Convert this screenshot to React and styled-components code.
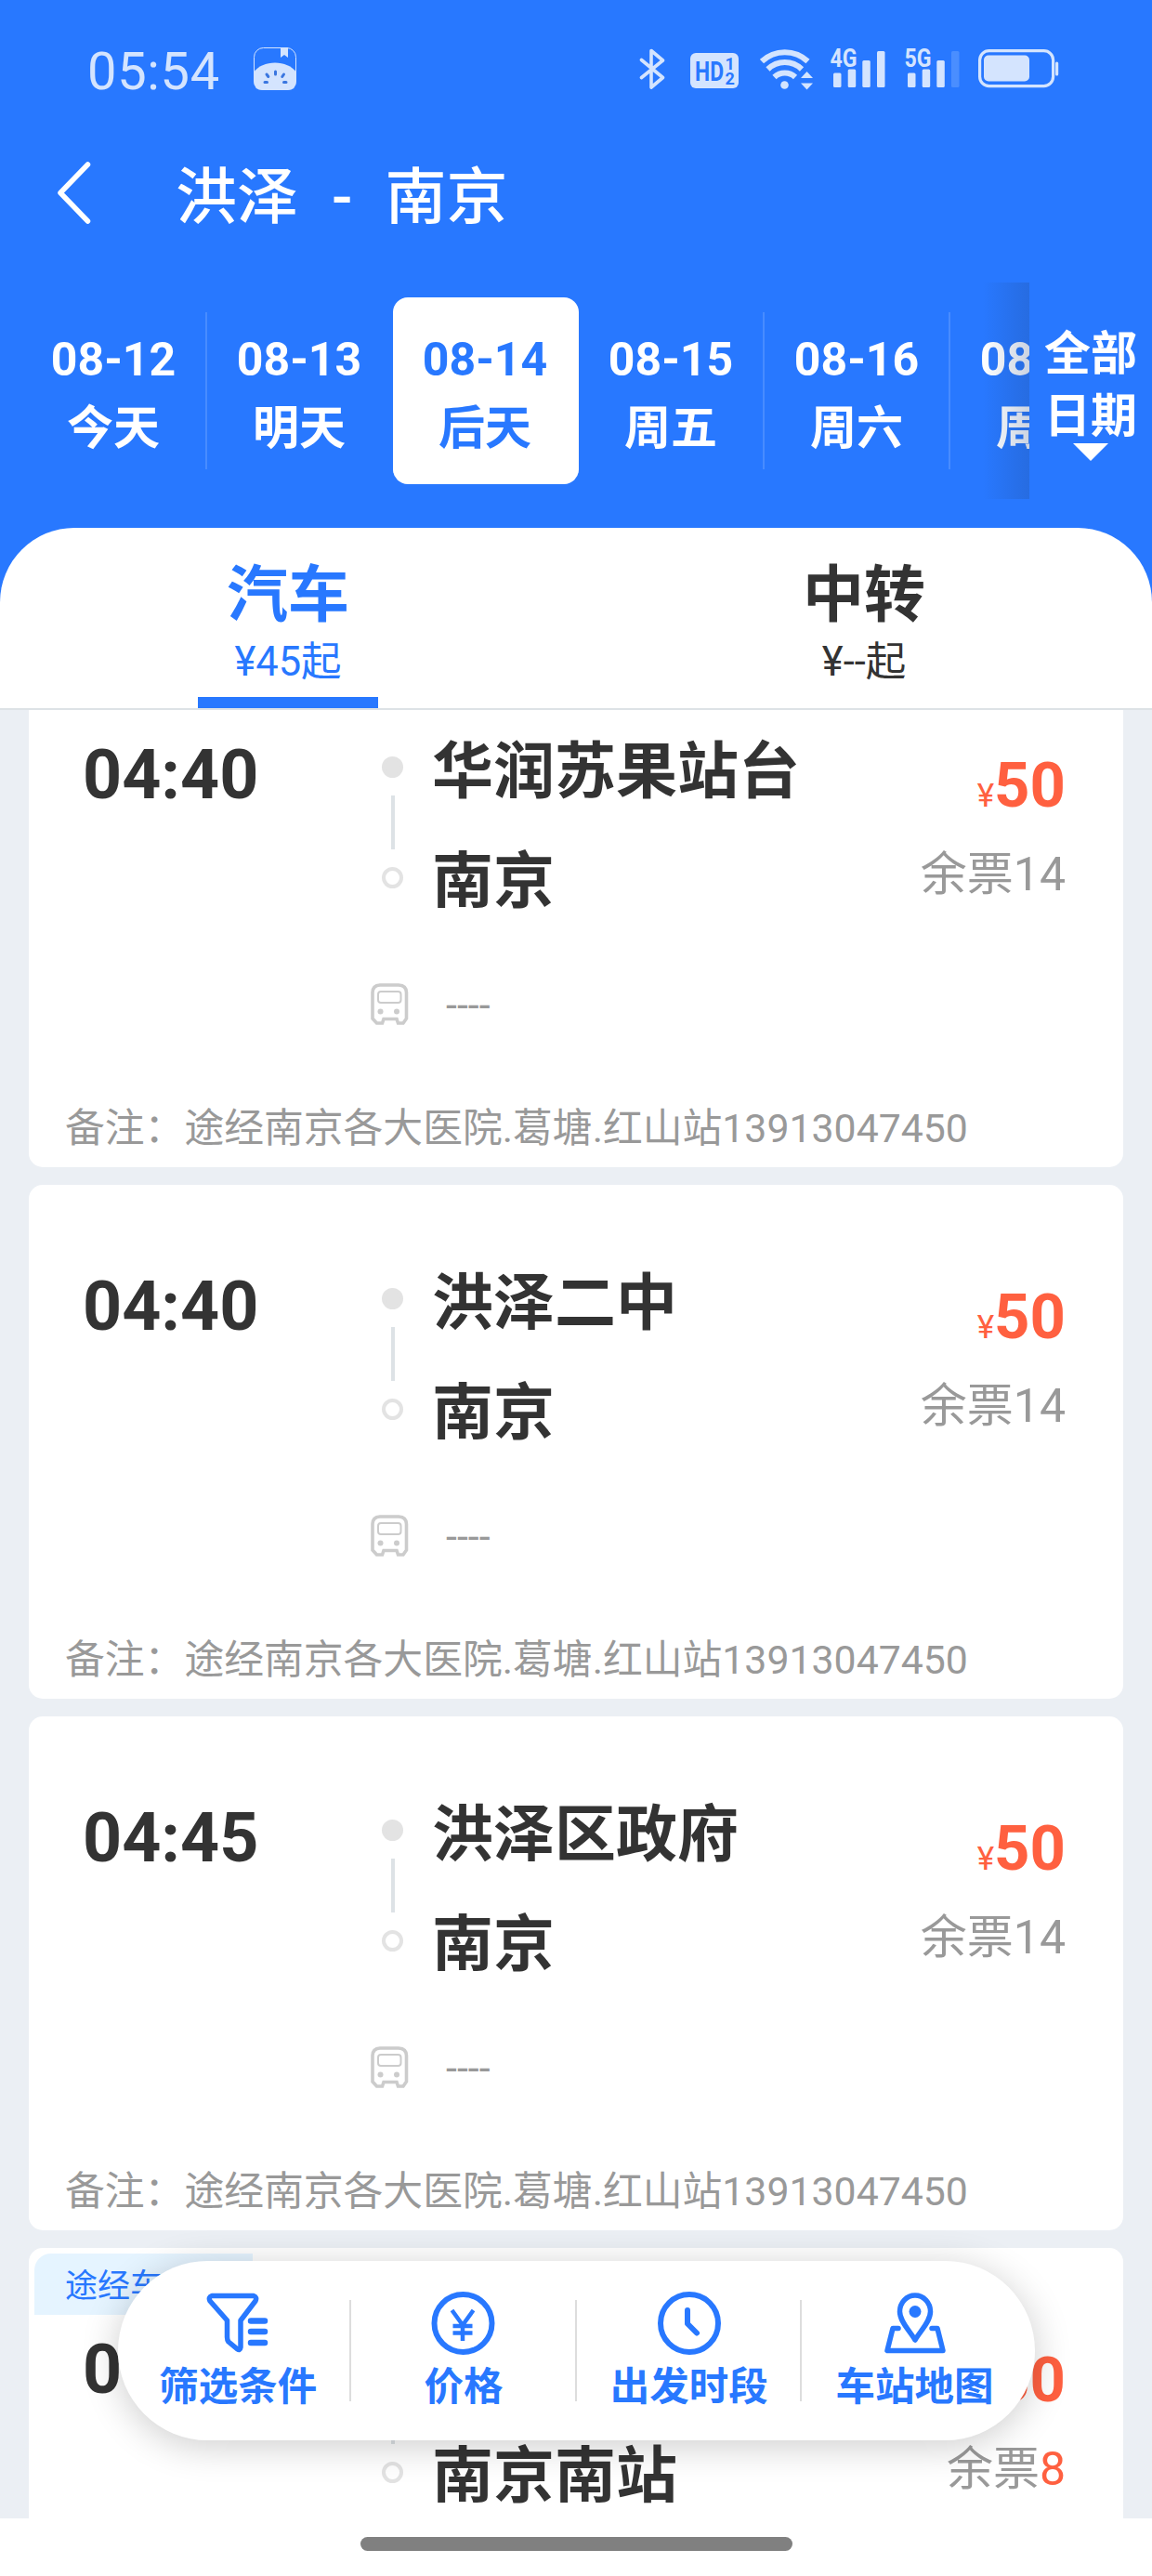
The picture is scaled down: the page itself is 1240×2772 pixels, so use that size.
import React from 'react';
import styled, { createGlobalStyle } from 'styled-components';

const dates = [
	{ date: '08-12', day: '今天' },
	{ date: '08-13', day: '明天' },
	{ date: '08-14', day: '后天' },
	{ date: '08-15', day: '周五' },
	{ date: '08-16', day: '周六' },
	{ date: '08-17', day: '周日' },
];

const remark = '备注：途经南京各大医院.葛塘.红山站13913047450';

const trips = [
	{ id: 1, time: '04:40', from: '华润苏果站台', to: '南京', price: 50, left: 14, remark },
	{ id: 2, time: '04:40', from: '洪泽二中', to: '南京', price: 50, left: 14, remark },
	{ id: 3, time: '04:45', from: '洪泽区政府', to: '南京', price: 50, left: 14, remark },
	{ id: 4, time: '05:00', from: '洪泽', to: '南京南站', price: 50, left: 8, remark, tag: '途经车' },
];

const BluetoothIcon = () => (
	<svg width="28" height="46" viewBox="0 0 28 46" fill="none" stroke="#d4e4fe" strokeWidth="3.600" strokeLinejoin="round" strokeLinecap="round">
		<path d="M2.500 13.500 L25.500 32.500 L13 43 V3.500 L25.500 14 L2.500 32.500" />
	</svg>
);

const HdIcon = () => (
	<svg width="52" height="42" viewBox="0 0 52 42">
		<rect y="4" width="52" height="38" rx="6" fill="#d4e4fe" />
		<g fill="#2878ff" fontFamily="Roboto, sans-serif" fontWeight="700">
			<text x="5" y="34" fontSize="29" textLength="31" lengthAdjust="spacingAndGlyphs">HD</text>
			<text x="37.500" y="21.500" fontSize="18">1</text>
			<text x="37.500" y="37.500" fontSize="18">2</text>
		</g>
	</svg>
);

const WifiIcon = () => (
	<svg width="58" height="46" viewBox="0 0 58 46" fill="none" stroke="#d4e4fe" strokeWidth="6">
		<path d="M2 15 A36 36 0 0 1 51.500 15" />
		<path d="M8.500 23.500 A26 26 0 0 1 45 23.500" />
		<path d="M15.500 32 A16 16 0 0 1 38 32" />
		<circle cx="26.500" cy="40.500" r="4.300" fill="#d4e4fe" stroke="none" />
		<path d="M44 33 L50.500 26 L57 33 Z M44 38.500 L50.500 45.500 L57 38.500 Z" fill="#d4e4fe" stroke="none" />
	</svg>
);

const SignalIcon = ({ label, weak }) => (
	<svg width="60" height="44" viewBox="0 0 60 44" fill="#d4e4fe" overflow="visible">
		<text x="0.500" y="20" fontSize="28" fontFamily="Roboto, sans-serif" fontWeight="700" textLength="29" lengthAdjust="spacingAndGlyphs">
			{label}
		</text>
		<rect x="4" y="26.500" width="8.500" height="15.500" rx="1.500" />
		<rect x="19.700" y="22.500" width="8.500" height="19.500" rx="1.500" />
		<rect x="35.300" y="13" width="8.500" height="29" rx="1.500" />
		<rect x="51" y="3" width="8.500" height="39" rx="1.500" opacity={weak ? 0.2 : 1} />
	</svg>
);

const BatteryIcon = () => (
	<svg width="88" height="42" viewBox="0 0 88 42">
		<rect x="1.600" y="1.600" width="79" height="38" rx="10" fill="none" stroke="#d4e4fe" strokeWidth="3.200" />
		<rect x="6" y="6.500" width="49" height="28" rx="5" fill="#d4e4fe" />
		<rect x="83" y="13.500" width="3.200" height="15" rx="1.500" fill="#d4e4fe" />
	</svg>
);

const MelonIcon = () => (
	<svg width="46" height="46" viewBox="0 0 46 46">
		<rect x="0.500" y="0.500" width="45" height="45" rx="10" fill="none" stroke="#d4e4fe" />
		<path d="M0 27 C9 13 37 13 46 27 V36 Q46 46 36 46 H10 Q0 46 0 36 Z" fill="#d4e4fe" />
		<path d="M29 0 H37 V11 L33 8 L29 11 Z" fill="#d4e4fe" />
		<path d="M23.500 26 V29 M14 29 L15.800 31.500 M32.500 29 L30.800 31.500 M12 37.500 H14.500 M32.500 37.500 H35" stroke="#3a76e0" strokeWidth="3" strokeLinecap="round" />
	</svg>
);

const BackIcon = () => (
	<svg width="36" height="67" viewBox="0 0 36 67" fill="none" stroke="#fff" strokeWidth="5.500" strokeLinecap="round" strokeLinejoin="round">
		<path d="M32.500 3 L3 33.500 L32.500 64" />
	</svg>
);

const BusIcon = () => (
	<svg width="42" height="45" viewBox="0 0 42 45" fill="none" stroke="#ccc" strokeWidth="3.600">
		<path d="M10 2 H30 Q38.500 2.500 38.500 10 V38 L35 43 H29.500 L28 38.500 H14 L12.500 43 H6.500 L2 38 V10 Q2 2.500 10 2 Z" />
		<rect x="8" y="9" width="24.500" height="12" rx="3" strokeWidth="2" />
		<circle cx="10.500" cy="30.500" r="3" fill="#ccc" stroke="none" />
		<circle cx="28" cy="30.500" r="3" fill="#ccc" stroke="none" />
	</svg>
);

const FilterIcon = () => (
	<svg width="70" height="70" viewBox="0 0 70 70" fill="none" stroke="#2878ff" strokeWidth="5.500" strokeLinejoin="round" strokeLinecap="round">
		<path d="M7 5.500 H52 Q56 7 54 11 L38 32 V61 Q37.500 65 34 62.500 L25 55 Q23.500 53 23.500 50 V32 L5 11 Q3 7 7 5.500 Z" />
		<path d="M49 32.500 H64 M49 44 H64 M49 56 H64" strokeWidth="6.500" />
	</svg>
);

const YuanIcon = () => (
	<svg width="70" height="70" viewBox="0 0 70 70" fill="none" stroke="#2878ff" strokeWidth="6">
		<circle cx="34.500" cy="35" r="31" />
		<path d="M22.500 21 L34 37 L45.500 21 M34 36 V54 M23.500 38 H44.500 M23.500 45.500 H44.500" strokeWidth="4.500" />
	</svg>
);

const ClockIcon = () => (
	<svg width="70" height="70" viewBox="0 0 70 70" fill="none" stroke="#2878ff" strokeWidth="6" strokeLinecap="round" strokeLinejoin="round">
		<circle cx="35" cy="35" r="31" />
		<path d="M33 21 V35.500 L43 45.500" />
	</svg>
);

const MapIcon = () => (
	<svg width="70" height="70" viewBox="0 0 70 70" fill="none" stroke="#2878ff" strokeWidth="5.500" strokeLinejoin="round" strokeLinecap="round">
		<path d="M35 53 C29 43 18.500 33 18.500 22.500 A16.500 17.500 0 0 1 51.500 22.500 C51.500 33 41 43 35 53 Z" />
		<circle cx="35" cy="22.500" r="6.500" fill="#2878ff" stroke="none" />
		<path d="M17 40.500 H11 L5 64.500 H65 L59 40.500 H53" />
	</svg>
);

const actions = [
	{ label: '筛选条件', Icon: FilterIcon },
	{ label: '价格', Icon: YuanIcon },
	{ label: '出发时段', Icon: ClockIcon },
	{ label: '车站地图', Icon: MapIcon },
];

const TripCard = ({ trip }) => (
	<Card>
		{trip.tag && <Tag>{trip.tag}</Tag>}
		<CardMain>
			<Time>{trip.time}</Time>
			<Rail>
				<Dot />
				<RailLine />
				<Dot $hollow />
			</Rail>
			<Stations>
				<p>{trip.from}</p>
				<p>{trip.to}</p>
			</Stations>
			<Fare>
				<Price>
					<small>¥</small>
					{trip.price}
				</Price>
				<Remaining $few={trip.left < 10}>
					余票<span>{trip.left}</span>
				</Remaining>
			</Fare>
		</CardMain>
		<BusRow>
			<BusIcon />
			<span>----</span>
		</BusRow>
		<Remark>{trip.remark}</Remark>
	</Card>
);

const App = () => {
	return (
		<Screen>
			<GlobalStyle />
			<Header>
				<StatusBar>
					<Clock>05:54</Clock>
					<MelonIcon />
					<StatusIcons>
						<BluetoothIcon />
						<HdIcon />
						<WifiIcon />
						<SignalIcon label="4G" />
						<SignalIcon label="5G" weak />
						<BatteryIcon />
					</StatusIcons>
				</StatusBar>
				<NavBar>
					<BackIcon />
					<Title>
						洪泽<span>-</span>南京
					</Title>
				</NavBar>
				<DateBar>
					<DateList>
						{dates.map((item, i) => (
							<DateItem key={item.date} $active={i === 2} $divider={i !== 1 && i !== 2}>
								<strong>{item.date}</strong>
								<em>{item.day}</em>
							</DateItem>
						))}
						<DateShade />
					</DateList>
					<AllDates>
						<span>全部</span>
						<span>日期</span>
						<Caret />
					</AllDates>
				</DateBar>
				<Tabs>
					<Tab $active>
						<h2>汽车</h2>
						<p>¥45起</p>
					</Tab>
					<Tab>
						<h2>中转</h2>
						<p>¥--起</p>
					</Tab>
				</Tabs>
			</Header>
			<TripList>
				{trips.map((trip) => (
					<TripCard key={trip.id} trip={trip} />
				))}
			</TripList>
			<ActionBar>
				{actions.map(({ label, Icon }) => (
					<Action key={label}>
						<Icon />
						<span>{label}</span>
					</Action>
				))}
			</ActionBar>
			<HomeArea>
				<HomeBar />
			</HomeArea>
		</Screen>
	);
};

export default App;

const GlobalStyle = createGlobalStyle`
	* {
		box-sizing: border-box;
		margin: 0;
		padding: 0;
	}
	body {
		background: #fff;
		font-family: Roboto, 'Noto Sans CJK SC', sans-serif;
	}
	svg {
		display: block;
		flex-shrink: 0;
	}
`;

const Screen = styled.div`
	position: relative;
	width: 1240px;
	height: 2772px;
	display: flex;
	flex-direction: column;
	overflow: hidden;
	background: #fff;
`;

const Header = styled.header`
	flex-shrink: 0;
	background: #2878ff;
	color: #fff;
`;

const StatusBar = styled.div`
	display: flex;
	align-items: center;
	height: 145px;
	padding: 3px 99px 0 94px;
	color: #d4e4fe;
`;

const Clock = styled.div`
	width: 179px;
	font-size: 56px;
	letter-spacing: 0.7px;
	line-height: 64px;
	padding-top: 5px;
`;

const StatusIcons = styled.div`
	display: flex;
	align-items: center;
	margin-left: auto;
	gap: 20px;

	> :nth-child(2) {
		margin-left: 7px;
	}
	> :nth-child(3) {
		margin-left: 3px;
	}
	> :nth-child(4) {
		margin-left: -3px;
	}
`;

const NavBar = styled.div`
	display: flex;
	align-items: flex-start;
	height: 159px;
	padding: 29px 0 0 62px;
`;

const Title = styled.h1`
	margin-left: 91px;
	font-size: 66px;
	font-weight: 500;
	line-height: 78px;

	> span {
		margin: 0 35px 0 36px;
	}
`;

const DateBar = styled.div`
	display: flex;
	height: 233px;
	margin-bottom: 31px;
`;

const DateList = styled.div`
	position: relative;
	display: flex;
	width: 1108px;
	padding: 16px 0 16px 23px;
	overflow: hidden;
`;

const DateItem = styled.div`
	position: relative;
	flex: 0 0 200px;
	padding: 31px 2px 0 0;
	text-align: center;
	border-radius: 16px;
	font-size: 50px;
	background: ${({ $active }) => ($active ? '#fff' : 'transparent')};
	color: ${({ $active }) => ($active ? '#2878ff' : '#fff')};

	> strong {
		display: block;
		font-weight: 700;
		line-height: 72px;
	}
	> em {
		display: block;
		font-style: normal;
		font-weight: 700;
		line-height: 76px;
	}

	&::after {
		content: '';
		display: ${({ $divider }) => ($divider ? 'block' : 'none')};
		position: absolute;
		top: 16px;
		right: 0;
		width: 2px;
		height: 169px;
		background: rgba(255, 255, 255, 0.15);
	}
`;

const DateShade = styled.div`
	position: absolute;
	top: 0;
	right: 0;
	width: 50px;
	height: 100%;
	background: linear-gradient(to right, rgba(34, 60, 100, 0), rgba(34, 70, 130, 0.24));
`;

const AllDates = styled.div`
	flex: 1;
	display: flex;
	flex-direction: column;
	align-items: center;
	padding-top: 44px;
	font-size: 50px;
	font-weight: 700;
	line-height: 67px;
`;

const Caret = styled.i`
	margin-top: -5px;
	border: 19px solid transparent;
	border-top-color: #fff;
	border-bottom: 0;
`;

const Tabs = styled.div`
	display: flex;
	height: 196px;
	background: #fff;
	border-bottom: 2px solid #dde2e6;
	border-radius: 80px 80px 0 0;
`;

const Tab = styled.div`
	flex: 1;
	display: flex;
	flex-direction: column;
	align-items: center;
	color: ${({ $active }) => ($active ? '#2878ff' : '#333')};

	> h2 {
		margin-top: 33px;
		font-size: 66px;
		font-weight: 700;
		line-height: 80px;
	}
	> p {
		font-size: 43.5px;
		line-height: 63px;
	}

	&::after {
		content: '';
		width: 194px;
		height: 12px;
		margin-top: auto;
		background: ${({ $active }) => ($active ? '#2878ff' : 'transparent')};
	}
`;

const TripList = styled.main`
	flex-shrink: 0;
	height: 1946px;
	padding: 0 31px;
	overflow: hidden;
	background: #ebeff4;

	> :first-child {
		margin-top: -61px;
	}
`;

const Card = styled.section`
	position: relative;
	height: 553px;
	margin-bottom: 19px;
	padding-top: 69px;
	border-radius: 15px;
	background: #fff;
`;

const Tag = styled.div`
	position: absolute;
	top: 6px;
	left: 6px;
	width: 235px;
	height: 66px;
	padding-left: 33px;
	border-radius: 18px 0 18px 0;
	background: #e5f4ff;
	color: #2878ff;
	font-size: 35px;
	line-height: 71px;
`;

const CardMain = styled.div`
	display: flex;
	height: 238px;
	padding: 0 62px 0 58px;
`;

const Time = styled.div`
	width: 322px;
	color: #333;
	font-size: 73.5px;
	font-weight: 700;
	line-height: 125px;
`;

const Rail = styled.div`
	display: flex;
	flex-direction: column;
	align-items: center;
	gap: 19px;
	padding-top: 42px;
`;

const Dot = styled.i`
	width: 23px;
	height: 23px;
	border-radius: 50%;
	border: 4px solid #e3e3e3;
	background: ${({ $hollow }) => ($hollow ? '#fff' : '#e3e3e3')};
`;

const RailLine = styled.i`
	width: 4px;
	height: 58px;
	background: #dde2e6;
`;

const Stations = styled.div`
	margin-left: 31px;
	color: #333;
	font-size: 66px;
	font-weight: 700;
	line-height: 118px;
`;

const Fare = styled.div`
	margin-left: auto;
	text-align: right;
`;

const Price = styled.div`
	color: #ff6040;
	font-size: 67px;
	font-weight: 700;
	line-height: 146px;

	> small {
		font-size: 35px;
		font-weight: 400;
		line-height: 0;
	}
`;

const Remaining = styled.div`
	color: #999;
	font-size: 50px;
	line-height: 46px;

	> span {
		color: ${({ $few }) => ($few ? '#ff6040' : 'inherit')};
	}
`;

const BusRow = styled.div`
	display: flex;
	align-items: center;
	gap: 39px;
	margin-top: 47px;
	padding-left: 368px;
	color: #999;
	font-size: 43px;
	line-height: 45px;

	> span {
		padding-top: 2px;
	}
`;

const Remark = styled.p`
	margin: 89px 0 0 39px;
	color: #999;
	font-size: 42.8px;
	line-height: 43px;
	white-space: nowrap;
`;

/* floats over the list */
const ActionBar = styled.nav`
	position: absolute;
	left: 127px;
	bottom: 146px;
	display: flex;
	width: 987px;
	height: 193px;
	padding: 0 8px;
	border-radius: 97px;
	background: #fff;
	box-shadow: 0 6px 40px rgba(0, 0, 0, 0.2);
`;

const Action = styled.div`
	position: relative;
	flex: 1;
	display: flex;
	flex-direction: column;
	align-items: center;
	padding-top: 32px;
	color: #2878ff;
	font-size: 42.5px;
	font-weight: 700;
	line-height: 68px;

	&:not(:last-child)::after {
		content: '';
		position: absolute;
		top: 42px;
		right: 0;
		width: 2px;
		height: 109px;
		background: #ddd;
	}
`;

const HomeArea = styled.div`
	flex: 1;
	display: flex;
	justify-content: center;
	padding-top: 20px;
`;

const HomeBar = styled.div`
	width: 465px;
	height: 15px;
	border-radius: 8px;
	background: #808080;
`;
